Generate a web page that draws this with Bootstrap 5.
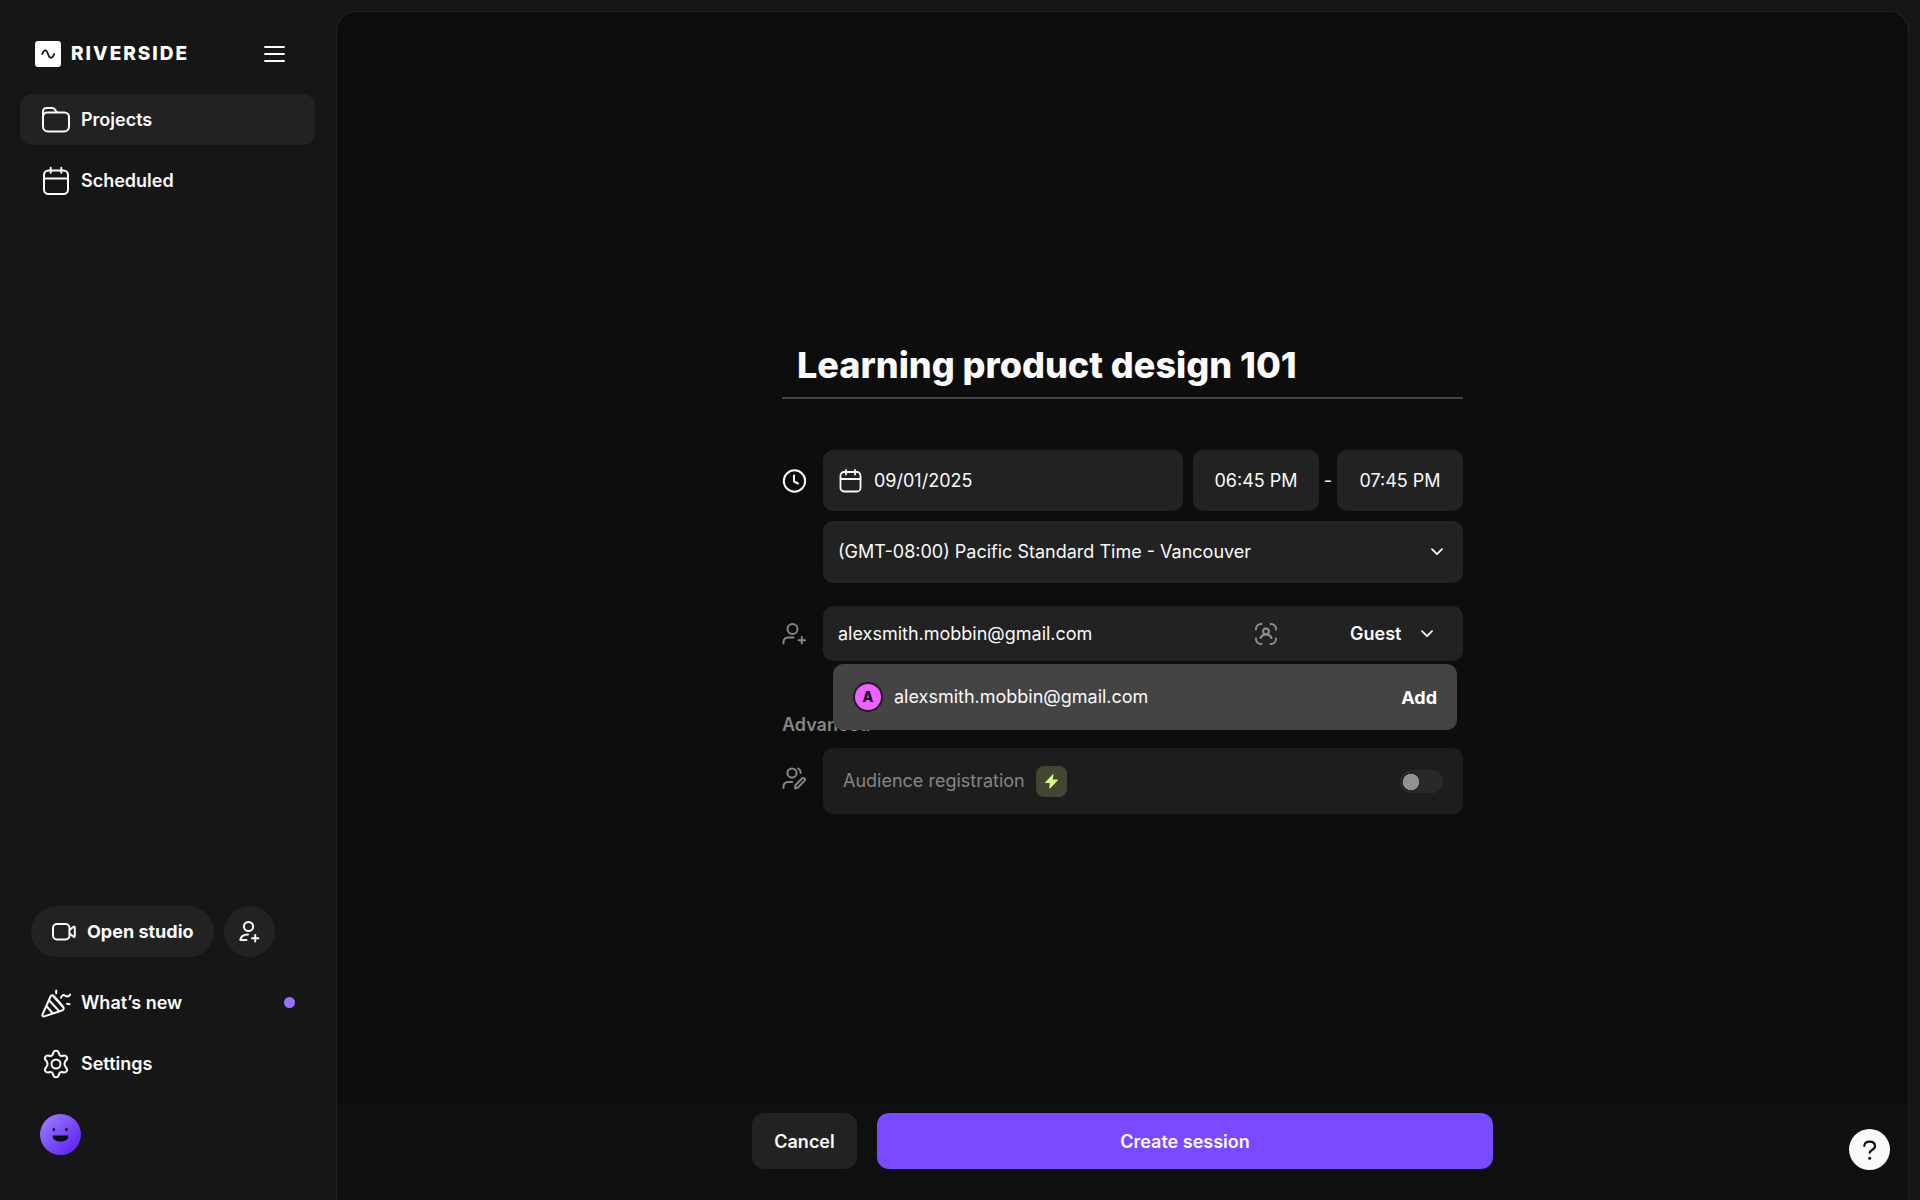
<!DOCTYPE html>
<html lang="en">
<head>
<meta charset="utf-8">
<meta name="viewport" content="width=device-width, initial-scale=1">
<title>Riverside - New session</title>
<link href="https://cdn.jsdelivr.net/npm/bootstrap@5.3.0/dist/css/bootstrap.min.css" rel="stylesheet">
<style>
  body { background: #161616; color: #fafafa; font-family: Inter, "Liberation Sans", sans-serif; font-size: 18px; line-height: 24px; }
  svg { display: block; flex: none; fill: none; stroke: currentColor; stroke-width: 2; stroke-linecap: round; stroke-linejoin: round; }
  .side { width: 336px; flex: none; padding: 40px 20px 45px; }
  .side-top { height: 28px; margin-bottom: 26px; padding: 0 31px 0 15px; }
  .brand { gap: 10px; color: #fff; font-size: 19px; font-weight: 800; letter-spacing: 2px; text-decoration: none; }
  .side-list { gap: 10px; }
  .side-link { height: 51px; width: 295px; padding: 0 20px 0 21px; gap: 10px; border-radius: 12px; color: #fafafa; font-weight: 600; text-decoration: none; }
  .side-link.active { background: #222; }
  .side-actions { gap: 10px; margin: 0 0 20px 11px; }
  .pill, .pill:hover { height: 51px; border: 0; background: #222; color: #fafafa; font-size: 18px; font-weight: 700; border-radius: 26px; padding: 0 20px; gap: 10px; }
  .pill-round { width: 51px; padding: 0; }
  .dot { width: 11px; height: 11px; border-radius: 50%; background: #9671ff; }
  .face { margin: 25px 0 0 20px; border: 0; padding: 0; background: none; width: 41px; }
  .stage { margin: 11px 11px 0 0; border: 1px solid #222; border-bottom: 0; border-radius: 20px 20px 0 0; background: #0d0d0d; min-width: 0; }
  .session { width: 100%; max-width: 681px; padding-top: 30px; }
  .title-box { height: 67px; padding: 0 15px; border: 0; border-bottom: 2px solid #444; border-radius: 0; font-size: 36px; font-weight: 800; line-height: 44px; }
  .title-box, .title-box:focus, .bare, .bare:focus { background: transparent; color: #fafafa; box-shadow: none; }
  .line-item { gap: 17px; }
  .date-line { margin-top: 51px; }
  .zone-line { margin-top: 10px; }
  .guest-line { margin-top: 23px; }
  .ico { width: 24px; flex: none; }
  .dim { color: #858585; }
  .box { background: #222; border-radius: 10px; }
  .bare { border: 0; padding: 0; font-size: 18px; line-height: 24px; }
  .date-row { gap: 10px; }
  .date-box { height: 61px; padding: 0 15px; gap: 12px; }
  .time-box, .time-box:focus { height: 61px; width: 126px; flex: none; background: #222; border-radius: 10px; }
  .to { width: 18px; flex: none; }
  .zone-box { height: 62px; }
  .zone-box select { height: 100%; padding: 0 15px; }
  .bare.form-select { background-image: none; }
  .bare option { background: #222; }
  .chev { position: absolute; right: 20px; top: 50%; transform: translateY(-50%); pointer-events: none; }
  .guest-box { height: 55px; padding: 0 0 0 15px; }
  .scan { color: #8f8f8f; }
  .role-wrap { width: 128px; margin-left: 57px; flex: none; height: 100%; }
  .role-wrap select { height: 100%; padding: 0 15px; font-weight: 600; }
  .role-wrap .chev { right: 30px; }
  .suggest { position: absolute; left: 10px; right: 6px; top: 58px; height: 66px; padding: 0 20px; gap: 11px; background: #444; border-radius: 10px; z-index: 2; }
  .initial { width: 30px; height: 30px; border-radius: 50%; border: 2px solid #221a26; background: #ee62ff; color: #18081b; font-size: 14px; font-weight: 800; }
  .add-btn, .add-btn:hover { border: 0; padding: 0; color: #fff; font-size: 18px; font-weight: 700; }
  .adv { margin: 52px 0 11px; font-size: 18px; line-height: 24px; font-weight: 600; color: #858585; }
  .aud-box { background: #1d1d1d; border-radius: 10px; height: 66px; padding: 0 20px; gap: 11px; color: #858585; }
  .zap { width: 31px; height: 31px; border-radius: 8px; background: #434631; color: #d4ff85; }
  .toggle, .toggle:focus { appearance: none; width: 43px; height: 23px; margin: 0; border: 0; border-radius: 12px; background: radial-gradient(circle at 11px 12px, #929292 7px, #929292 8px, #27292b 8px); box-shadow: none; }
  .foot { padding: 9px 24px 31px; background: #0f0f0f; }
  .foot-row { width: 100%; max-width: 741px; gap: 20px; }
  .foot .btn { height: 56px; border: 0; border-radius: 12px; color: #fafafa; font-size: 18px; font-weight: 600; }
  .cancel, .cancel:hover { width: 105px; background: #222; }
  .create, .create:hover { background: #794aff; }
  .help { position: fixed; right: 30px; bottom: 30px; width: 41px; height: 41px; border: 0; padding: 0; border-radius: 50%; background: #fafafa; color: #0d0d0d; }
</style>
<script src="https://cdn.jsdelivr.net/npm/bootstrap@5.3.0/dist/js/bootstrap.bundle.min.js"></script>
</head>
<body>
<div class="d-flex min-vh-100">
  <aside class="side d-flex flex-column">
    <div class="side-top d-flex align-items-center justify-content-between">
      <a href="#" class="brand d-flex align-items-center">
        <svg width="26" height="26" viewBox="0 0 26 26"><rect width="26" height="26" rx="3" fill="#fff" stroke="none"/><path d="M7.200 13C8.200 10.500 9 9.300 10.300 9.300C13.200 9.300 12.800 16.800 15.800 16.800C17.400 16.800 18.300 15.200 19.200 13" stroke="#161616" stroke-width="1.800"/></svg>
        RIVERSIDE
      </a>
      <button type="button" class="btn p-0 border-0 text-white" aria-label="Toggle menu">
        <svg width="21" height="16" viewBox="0 0 21 16"><path d="M1 1h19M1 8h19M1 15h19" stroke-width="1.800"/></svg>
      </button>
    </div>
    <nav class="side-list d-flex flex-column">
      <a href="#" class="side-link active d-flex align-items-center">
        <svg width="30" height="30" viewBox="0 0 30 30"><path d="M2 12V6.500A3.500 3.500 0 0 1 5.500 3H11.500C14.800 3 14.300 7.500 17 7.500H23.500A4.500 4.500 0 0 1 28 12v9.500A5 5 0 0 1 23 26.500H7A5 5 0 0 1 2 21.500V11.500A4 4 0 0 1 6 7.500H17"/></svg>
        Projects
      </a>
      <a href="#" class="side-link d-flex align-items-center">
        <svg width="30" height="30" viewBox="0 0 30 30"><rect x="3" y="4.500" width="24" height="23.500" rx="4.500"/><path d="M3 12.500h24M9.700 1.800v5M20.300 1.800v5"/></svg>
        Scheduled
      </a>
    </nav>

    <div class="mt-auto">
      <div class="side-actions d-flex">
        <button type="button" class="btn pill d-flex align-items-center">
          <svg width="26" height="24" viewBox="0 0 26 24"><rect x="2" y="4" width="16.500" height="15.500" rx="4"/><path d="M18.500 10l4-3.200c.6-.5 1.300-.1 1.300.6v8.700c0 .7-.7 1.100-1.300.6l-4-3.200"/></svg>
          Open studio
        </button>
        <button type="button" class="btn pill pill-round d-flex align-items-center justify-content-center" aria-label="Invite people">
          <svg width="24" height="24" viewBox="0 0 24 24"><circle cx="11.500" cy="6.500" r="4.600"/><path d="M11 14.500C6.500 14.500 3.800 17 3.300 20H9.500M18.200 15v6.400M15 18.200h6.400"/></svg>
        </button>
      </div>
      <div class="side-list d-flex flex-column">
        <a href="#" class="side-link d-flex align-items-center">
          <svg width="30" height="30" viewBox="0 0 30 30"><path d="M9.500 8.500L1.500 26.500C1 27.800 2 28.900 3.300 28.400L21 22.500C23 21.800 23.200 20 22 18.500L13.500 8.700C12 7 10.300 6.800 9.500 8.500ZM8.300 12.500L18 23M5.800 18.500L11.500 25M12.500 8.500L22 19M15.200 2.500v2.800M26 15.700l2.500.5M20 9.700c1.500-4 3.500-2.500 4.500-1.800 2 1.200 3.500.5 4.800-1.400"/></svg>
          What’s new
          <span class="dot ms-auto"></span>
        </a>
        <a href="#" class="side-link d-flex align-items-center">
          <svg width="30" height="30" viewBox="0 0 30 30"><circle cx="15" cy="15" r="4.500"/><path d="M12.200 4.200C12.500 2.600 13.400 1.800 15 1.800s2.500.8 2.800 2.400c.4 2.200 2.200 3.200 4.200 2.500 1.600-.6 2.900-.2 3.700 1.200.8 1.400.5 2.600-.7 3.700-2 1.800-2 5 0 6.800 1.200 1.100 1.500 2.300.7 3.700-.8 1.400-2.100 1.800-3.700 1.200-2-.7-3.800.3-4.200 2.500-.3 1.600-1.200 2.400-2.800 2.400s-2.500-.8-2.800-2.400c-.4-2.200-2.200-3.200-4.200-2.500-1.600.6-2.900.2-3.700-1.200-.8-1.400-.5-2.600.7-3.700 2-1.800 2-5 0-6.800-1.200-1.100-1.500-2.300-.7-3.700.8-1.400 2.100-1.800 3.700-1.200 2 .7 3.800-.3 4.200-2.500Z"/></svg>
          Settings
        </a>
      </div>
      <button type="button" class="face d-block" aria-label="Account">
        <svg width="41" height="41" viewBox="0 0 41 41"><defs><linearGradient id="faceFill" x1="0" y1="0" x2="1" y2="1"><stop offset=".1" stop-color="#9b78ff"/><stop offset=".9" stop-color="#5d22f5"/></linearGradient></defs><circle cx="20.500" cy="20.500" r="20.500" fill="url(#faceFill)" stroke="none"/><g fill="#0d0d0d" stroke="none"><ellipse cx="13.800" cy="15.500" rx="1.200" ry="1.700"/><ellipse cx="26.500" cy="15.500" rx="1.200" ry="1.700"/><path d="M12.500 21.500h16c0 4-3.500 6-8 6s-8-2-8-6Z"/></g></svg>
      </button>
    </div>
  </aside>

  <main class="stage d-flex flex-column flex-grow-1">
    <div class="flex-grow-1 d-flex flex-column justify-content-center align-items-center">
      <form id="sessionForm" class="session">
        <input type="text" class="form-control title-box" aria-label="Session name" value="Learning product design 101">

        <div class="line-item date-line d-flex">
          <div class="ico d-flex align-items-center">
            <svg width="24" height="24" viewBox="0 0 24 24"><circle cx="12.500" cy="12" r="10.700"/><path d="M12 6.500v6l4 2"/></svg>
          </div>
          <div class="flex-grow-1 d-flex date-row">
            <label class="box date-box d-flex align-items-center flex-grow-1">
              <svg width="24" height="24" viewBox="0 0 24 24"><rect x="2.500" y="3" width="20" height="19.500" rx="3.500" stroke-width="1.800"/><path d="M2.500 10h20M8 1v4.500M17 1v4.500" stroke-width="1.800"/></svg>
              <input type="text" class="form-control bare" aria-label="Date" value="09/01/2025">
            </label>
            <div class="d-flex">
              <input type="text" class="form-control bare time-box text-center" aria-label="Start time" value="06:45 PM">
              <span class="to align-self-center text-center">-</span>
              <input type="text" class="form-control bare time-box text-center" aria-label="End time" value="07:45 PM">
            </div>
          </div>
        </div>

        <div class="line-item zone-line d-flex">
          <div class="ico"></div>
          <div class="box zone-box flex-grow-1 position-relative">
            <select class="form-select bare" aria-label="Time zone"><option>(GMT-08:00) Pacific Standard Time - Vancouver</option></select>
            <svg class="chev" width="12" height="8" viewBox="0 0 12 8"><path d="M1 1.200l5 5 5-5" stroke-width="1.800"/></svg>
          </div>
        </div>

        <div class="line-item guest-line d-flex">
          <div class="ico d-flex align-items-center dim">
            <svg width="24" height="24" viewBox="0 0 24 24"><circle cx="10.500" cy="7" r="5"/><path d="M1.500 21.500v-1.500a4.500 4.500 0 0 1 4.500-4.500H11.500M19.800 15v6.500M16.500 18.200h6.600"/></svg>
          </div>
          <div class="box guest-box flex-grow-1 d-flex align-items-center position-relative">
            <input type="email" class="form-control bare" aria-label="Invite by email" value="alexsmith.mobbin@gmail.com">
            <svg class="scan" width="24" height="24" viewBox="0 0 24 24"><path d="M2 7.500V7a5 5 0 0 1 5-5h.5M16.500 2h.5a5 5 0 0 1 5 5v.5M22 16.500v.5a5 5 0 0 1-5 5h-.5M7.500 22H7a5 5 0 0 1-5-5v-.5M6.500 16c1-2.300 3-3.500 5.500-3.500s4.500 1.200 5.500 3.500"/><circle cx="12" cy="9.300" r="2.900"/></svg>
            <div class="role-wrap position-relative">
              <select class="form-select bare" aria-label="Role"><option>Guest</option></select>
              <svg class="chev" width="12" height="8" viewBox="0 0 12 8"><path d="M1 1.200l5 5 5-5" stroke-width="1.800"/></svg>
            </div>
            <div class="suggest d-flex align-items-center">
              <span class="initial d-flex align-items-center justify-content-center">A</span>
              <span>alexsmith.mobbin@gmail.com</span>
              <button type="button" class="btn add-btn ms-auto">Add</button>
            </div>
          </div>
        </div>

        <h2 class="adv">Advanced</h2>
        <div class="line-item d-flex">
          <div class="ico d-flex align-items-center dim">
            <svg width="24" height="28" viewBox="0 0 24 28"><circle cx="10" cy="6" r="4.600"/><path d="M1.500 21v-1.500A4.500 4.500 0 0 1 6 15H10.300M16.200 1.500c1.500.9 2.500 2.500 2.500 4.500M13 21.500l.5-3.500 6.500-6.500c.8-.8 1.800-.6 2.400 0s.8 1.600 0 2.400L16 20.500Z"/></svg>
          </div>
          <div class="aud-box flex-grow-1 d-flex align-items-center">
            <label for="audience">Audience registration</label>
            <span class="zap d-flex align-items-center justify-content-center">
              <svg width="15" height="15" viewBox="0 0 15 15"><path d="M8.800.8L1.500 8.500h4.800L5.800 14.200l7.700-8.200H8.500Z" fill="currentColor" stroke-width="1"/></svg>
            </span>
            <input id="audience" class="toggle ms-auto" type="checkbox" role="switch">
          </div>
        </div>
      </form>
    </div>
    <div class="foot d-flex justify-content-center">
      <div class="foot-row d-flex">
        <button type="button" class="btn cancel">Cancel</button>
        <button type="submit" form="sessionForm" class="btn create flex-grow-1">Create session</button>
      </div>
    </div>
  </main>
</div>
<button type="button" class="help d-flex align-items-center justify-content-center" aria-label="Help">
  <svg width="24" height="24" viewBox="0 0 24 24"><path d="M6.300 7.800C6.600 5.200 8.800 3.600 11.700 3.600c3.200 0 5.300 1.900 5.300 4.700 0 3.800-5.300 3.400-5.300 6.400" stroke-width="2.200"/><circle cx="11.700" cy="20.300" r="1.500" fill="currentColor" stroke="none"/></svg>
</button>
</body>
</html>
